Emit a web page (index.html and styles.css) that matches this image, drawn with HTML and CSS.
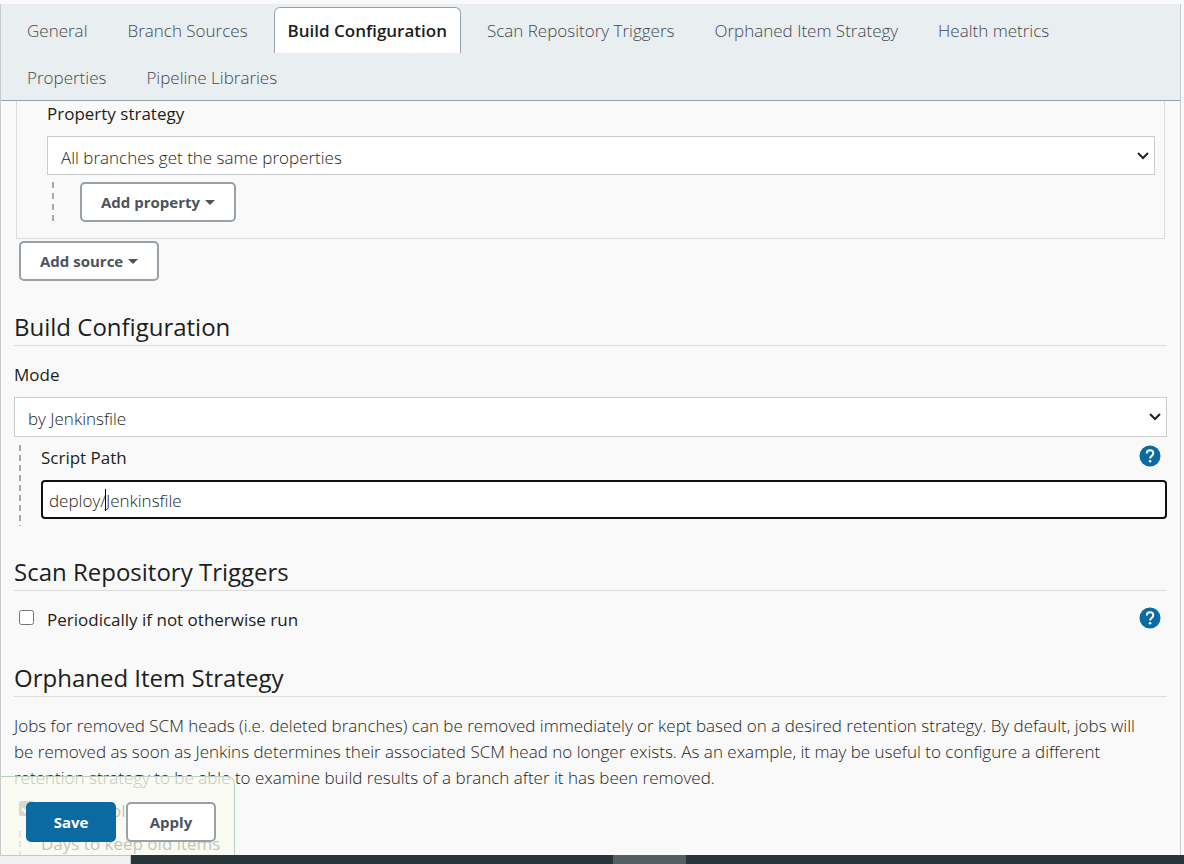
FILE: index.html
```html
<!DOCTYPE html>
<html lang="en">
<head>
<meta charset="utf-8">
<title>Build Configuration</title>
<link rel="stylesheet" href="styles.css">
</head>
<body>
<div class="window">
  <main class="panel">
    <nav class="tabs">
      <a class="tab" href="#general">General</a>
      <a class="tab" href="#sources">Branch Sources</a>
      <a class="tab tab-active" href="#build">Build Configuration</a>
      <a class="tab" href="#triggers">Scan Repository Triggers</a>
      <a class="tab" href="#orphaned">Orphaned Item Strategy</a>
      <a class="tab" href="#health">Health metrics</a>
      <a class="tab" href="#properties">Properties</a>
      <a class="tab" href="#libraries">Pipeline Libraries</a>
    </nav>
    <form class="config">
      <section class="source" id="sources">
        <label class="label" for="strategy">Property strategy</label>
        <select class="select" id="strategy"><option>All branches get the same properties</option></select>
        <div class="nested">
          <button class="button" type="button">Add property <span class="arrow"></span></button>
        </div>
      </section>
      <button class="button add-source" type="button">Add source <span class="arrow"></span></button>

      <section class="section" id="build">
        <h2 class="heading">Build Configuration</h2>
        <label class="label" for="mode">Mode</label>
        <select class="select select-mode" id="mode"><option>by Jenkinsfile</option></select>
        <div class="nested nested-field">
          <div class="row">
            <label class="label" for="path">Script Path</label>
            <button class="help" type="button" aria-label="Help for Script Path">
              <svg viewBox="0 0 22 22" width="22" height="22"><circle cx="11" cy="11" r="10.5" fill="#0b6aa2"/><path d="M7.8 8.6C7.8 6.5 9.1 5.2 11 5.2s3.3 1.2 3.3 3c0 2.600-3.200 2.700-3.200 5.200" fill="none" stroke="#fff" stroke-width="2"/><circle cx="11.100" cy="16.300" r="1.300" fill="#fff"/></svg>
            </button>
          </div>
          <div class="field">
            <input class="input" id="path" type="text" value="deploy/Jenkinsfile">
            <span class="caret"></span>
          </div>
        </div>
      </section>

      <section class="section" id="triggers">
        <h2 class="heading">Scan Repository Triggers</h2>
        <div class="row check-row">
          <label class="check"><input class="box" type="checkbox">Periodically if not otherwise run</label>
          <button class="help" type="button" aria-label="Help for Periodically if not otherwise run">
            <svg viewBox="0 0 22 22" width="22" height="22"><circle cx="11" cy="11" r="10.5" fill="#0b6aa2"/><path d="M7.8 8.6C7.8 6.5 9.1 5.2 11 5.2s3.3 1.2 3.3 3c0 2.600-3.200 2.700-3.200 5.200" fill="none" stroke="#fff" stroke-width="2"/><circle cx="11.100" cy="16.300" r="1.300" fill="#fff"/></svg>
          </button>
        </div>
      </section>

      <section class="section" id="orphaned">
        <h2 class="heading">Orphaned Item Strategy</h2>
        <p class="text">Jobs for removed SCM heads (i.e. deleted branches) can be removed immediately or kept based on a desired retention strategy. By default, jobs will be removed as soon as Jenkins determines their associated SCM head no longer exists. As an example, it may be useful to configure a different retention strategy to be able to examine build results of a branch after it has been removed.</p>
        <label class="check check-old"><input class="box" type="checkbox" checked>Discard old items</label>
        <div class="nested nested-field nested-days">
          <label class="label" for="days">Days to keep old items</label>
          <input class="input" id="days" type="text">
        </div>
      </section>
    </form>
    <div class="actions">
      <button class="button button-primary" type="button">Save</button>
      <button class="button" type="button">Apply</button>
    </div>
  </main>
  <footer class="taskbar">
    <div class="status"></div>
    <div class="task"></div>
  </footer>
</div>
</body>
</html>
```
FILE: styles.css
```css
* { box-sizing: border-box; }

body {
  margin: 0;
  background: #f9f9f9;
  color: #1c1e20;
  font: 300 17px/26px "Open Sans", "Noto Sans", sans-serif;
}

.window {
  display: flex;
  flex-direction: column;
  height: 100vh;
  padding-top: 4px;
  overflow: hidden;
}

.panel {
  position: relative;
  display: flex;
  flex: 1;
  flex-direction: column;
  min-height: 0;
  margin-right: 3px;
  border: 1px solid #c8cbce;
  border-width: 0 1px;
}

.tabs {
  display: flex;
  flex-wrap: wrap;
  gap: 1px 12px;
  padding: 3px 12px 0;
  background: #e9eef1;
  border-bottom: 1px solid #98a1a8;
}

.tab {
  padding: 5px 13px;
  border: 1px solid transparent;
  border-bottom: 0;
  border-radius: 6px 6px 0 0;
  color: #43494f;
  line-height: 35px;
  text-decoration: none;
}

.tab-active {
  background: #fff;
  border-color: #98a1a8;
  color: #1c1e20;
  font-weight: 600;
}

.config {
  flex: 1;
  min-height: 0;
  padding: 0 13px;
  overflow: hidden;
}

.source {
  margin: 0 2px;
  padding: 0 9px 16px 30px;
  border: 1px solid #dcdcdc;
  border-top: 0;
}

.label {
  display: block;
  font-weight: 500;
}

.select {
  display: block;
  width: 100%;
  height: 39px;
  margin-top: 9px;
  padding: 4px 30px 0 13px;
  appearance: none;
  background: #fff url("data:image/svg+xml,%3Csvg xmlns='http://www.w3.org/2000/svg' width='12' height='8'%3E%3Cpath d='M1 1l5 5 5-5' fill='none' stroke='%23222' stroke-width='2'/%3E%3C/svg%3E") right 5px center no-repeat;
  border: 1px solid #ccc;
  border-radius: 0;
  color: #1c1e20;
  font: inherit;
}

.select-mode { height: 40px; }

.nested {
  margin: 7px 0 0 5px;
  padding-left: 28px;
  background: repeating-linear-gradient(#a9a9a9 0 6px, transparent 6px 11px) 0 0 / 2px 100% no-repeat;
}

.nested-field {
  margin-top: 8px;
  padding: 0 0 7px 22px;
  background-image: repeating-linear-gradient(#a9a9a9 0 6px, transparent 6px 10px);
}

.button {
  min-width: 90px;
  height: 40px;
  padding: 0 19px;
  background: #fff;
  border: 2px solid #98a1a8;
  border-radius: 5px;
  color: #4b545c;
  font: 700 15px/20px "Open Sans", "Noto Sans", sans-serif;
}

.nested .button { display: block; }

.add-source {
  display: block;
  margin: 2px 0 0 5px;
}

.arrow {
  display: inline-block;
  margin-left: 1px;
  border: 5px solid transparent;
  border-top-color: #4b545c;
  border-bottom: 0;
  vertical-align: 3px;
}

.section { margin-top: 28px; }

.heading {
  margin: 0 0 16px;
  border-bottom: 1px solid #dcdcdc;
  font-size: 24px;
  font-weight: 500;
  line-height: 36px;
}

.row {
  display: flex;
  align-items: flex-start;
  justify-content: space-between;
}

.help {
  display: flex;
  margin-right: 6px;
  padding: 0;
  background: none;
  border: 0;
}

.field {
  position: relative;
  margin-top: 9px;
}

.input {
  display: block;
  width: 100%;
  height: 39px;
  padding: 2px 6px 0;
  background: #fff;
  border: 2px solid #111;
  border-radius: 4px;
  color: #1c1e20;
  font: inherit;
}

.caret {
  position: absolute;
  top: 9px;
  left: 64px;
  width: 1px;
  height: 22px;
  background: #000;
}

.check {
  display: flex;
  align-items: flex-start;
  font-weight: 500;
}

.box {
  width: 15px;
  height: 15px;
  margin: 3px 13px 0 5px;
}

.check-row { height: 25px; }

.text {
  margin: 0;
  padding-right: 12px;
}

.check-old { margin-top: 7px; }

.check-old .box { accent-color: #767676; }

.nested-days { margin-top: 7px; }

.actions {
  position: absolute;
  bottom: 0;
  left: 0;
  display: flex;
  gap: 10px;
  padding: 25px 18px 13px 25px;
  background: rgba(248, 250, 238, 0.75);
  border: 1px solid #b9cfc6;
  border-width: 1px 1px 0 0;
  border-radius: 0 8px 0 0;
}

.button-primary {
  background: #0b6aa2;
  border-color: #0b6aa2;
  color: #fff;
}

.taskbar {
  display: flex;
  height: 9px;
  background: #27343a;
}

.status {
  width: 131px;
  background: #f1f1f1;
  border-top: 1px solid #c4c6c8;
  border-right: 1px solid #c4c6c8;
}

.task {
  width: 73px;
  margin-left: 482px;
  background: #545e63;
}
```
